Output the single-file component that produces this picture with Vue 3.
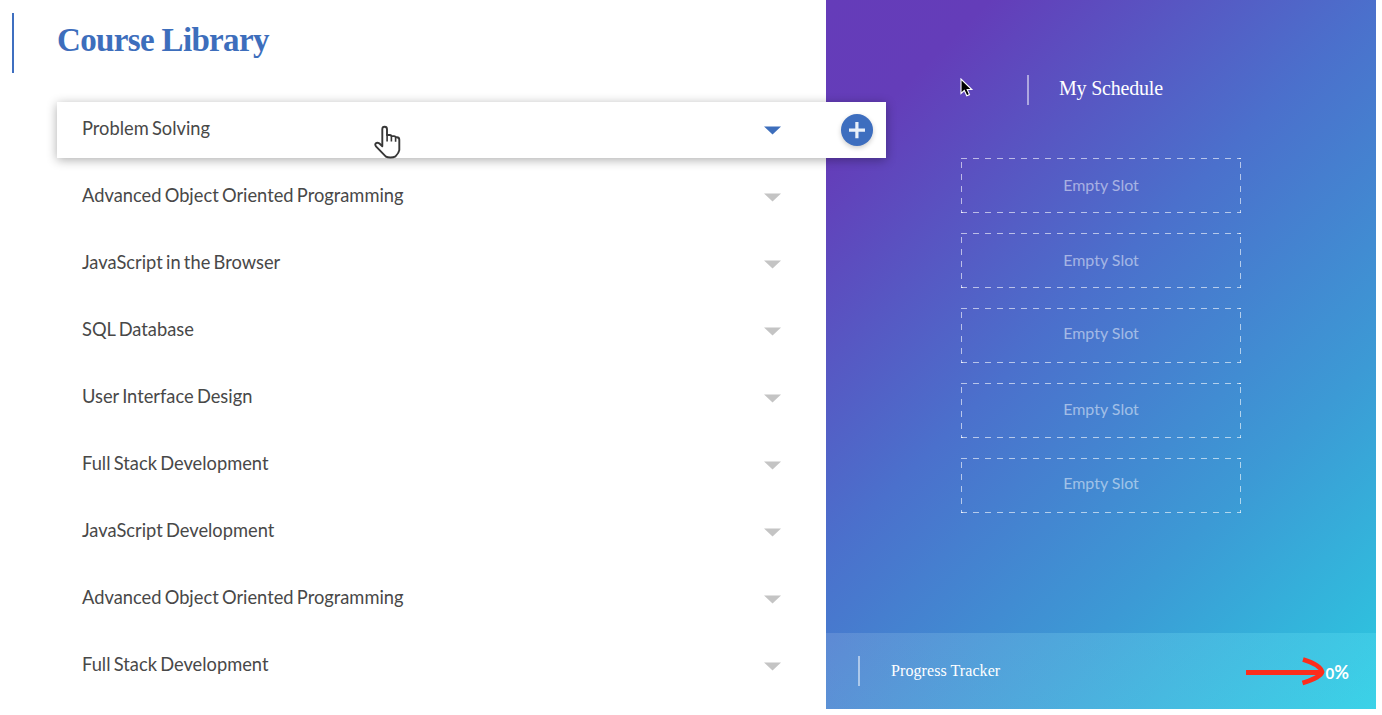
<script setup>
const courses = [
  'Problem Solving',
  'Advanced Object Oriented Programming',
  'JavaScript in the Browser',
  'SQL Database',
  'User Interface Design',
  'Full Stack Development',
  'JavaScript Development',
  'Advanced Object Oriented Programming',
  'Full Stack Development',
]
const slots = 5
</script>

<template>
  <div class="page">
    <main class="library">
      <header class="library-head">
        <span class="head-rule"></span>
        <h1>Course Library</h1>
      </header>
      <ul class="courses">
        <li v-for="(course, i) in courses" :key="i" class="course" :class="{ active: i === 0 }">
          <span class="name">{{ course }}</span>
          <svg class="caret" width="18" height="9" viewBox="0 0 18 9"><path d="M0 .5h17L8.500 8.600z" /></svg>
          <button v-if="i === 0" class="add" aria-label="Add course">
            <svg width="32" height="32" viewBox="0 0 32 32">
              <path d="M8 16.2h16M15.9 8v16.2" fill="none" stroke="#e9f0f9" stroke-width="3.2" />
            </svg>
          </button>
        </li>
      </ul>
      <svg class="hand" width="28" height="36" viewBox="0 0 28 36">
        <path
          d="M8.3 22.3V5.2C8.3 1.9 13 1.9 13 5.2V11h3c1 0 1.4.6 1.6 1.1h2.6c1 0 1.4.6 1.6 1.1h1c1.7 0 2.5 1.2 2.5 2.5v10.500c-.4 2.700-1.900 4.300-3.800 6.200-2.700 1.400-7.300 1.500-9.600.2L2.200 22.700C-.2 19.400 2.800 18 5.200 19.300z"
          fill="#fff" stroke="#373737" stroke-width="1.9" stroke-linejoin="round"
        />
        <path d="M13.100 10.500v7M17.400 12v5.500M21.600 13v4.800" fill="none" stroke="#373737" stroke-width="1.600" />
      </svg>
    </main>

    <aside class="schedule">
      <header class="schedule-head">
        <span class="short-rule"></span>
        <h2>My Schedule</h2>
      </header>
      <div class="slots">
        <div v-for="n in slots" :key="n" class="slot">
          <svg class="dashes" width="280" height="55" viewBox="0 0 280 55">
            <path d="M0 .5H280M0 54.500H280" stroke-dasharray="6 6" />
            <path d="M.5 0V55M279.500 0V55" stroke-dasharray="6 6" stroke-dashoffset="8" />
            <path d="M0 54.500h2M278 .5h2" />
          </svg>
          <span>Empty Slot</span>
        </div>
      </div>
      <footer class="tracker">
        <span class="short-rule"></span>
        <span class="tracker-label">Progress Tracker</span>
        <span class="percent"><span class="digit">0</span>%</span>
        <svg class="arrow" width="84" height="32" viewBox="0 0 84 32">
          <path d="M1 17.500H76M58 4.500C68 7.500 76 12 77 17C76 21 66 25.500 57.500 28" fill="none" stroke="#fc2d1c" stroke-width="4.800" />
        </svg>
      </footer>
      <svg class="pointer" width="14" height="20" viewBox="0 0 14 20">
        <path d="M1 1v14.500l3.300-3 2.500 5.300 2.700-1.200-2.300-5.100h4.600z" fill="#000" stroke="#fff" stroke-width="1.100" />
      </svg>
    </aside>
  </div>
</template>

<style>
body {
  margin: 0;
  background: #fff;
}
</style>

<style scoped>
.page {
  display: flex;
  width: 1382px;
  height: 715px;
  overflow: hidden;
  background: #fff;
  font-family: Lato, "Liberation Sans", sans-serif;
}
.library {
  position: relative;
  z-index: 2;
  width: 826px;
  flex: none;
}
.library-head {
  display: flex;
  padding: 13px 0 0 12px;
  height: 102px;
  box-sizing: border-box;
}
.head-rule {
  width: 2px;
  height: 60px;
  background: #3f6fc0;
}
h1 {
  margin: 6px 0 0 43px;
  font: bold 33px/42px "Liberation Serif", serif;
  letter-spacing: -0.65px;
  color: #3d6ebc;
  white-space: nowrap;
}
.courses {
  display: flex;
  flex-direction: column;
  gap: 11px;
  margin: 0 0 0 57px;
  padding: 0;
  list-style: none;
}
.course {
  display: flex;
  align-items: center;
  width: 829px;
  height: 56px;
  padding: 0 13px 0 25px;
  box-sizing: border-box;
}
.name {
  width: 681px;
  padding-bottom: 5px;
  font-size: 18.3px;
  line-height: 24px;
  word-spacing: -1.4px;
  color: #484848;
}
.caret {
  margin-left: 1px;
  fill: #c4c4c4;
}
.active {
  background: #fff;
  box-shadow: 0 2px 10px rgba(0, 0, 0, 0.32);
}
.active .caret {
  fill: #3d6ebc;
}
.add {
  margin-left: auto;
  width: 32px;
  height: 32px;
  padding: 0;
  border: 0;
  border-radius: 50%;
  background: #3d6ebf;
  box-shadow: 0 2px 5px rgba(0, 0, 0, 0.2);
}
.add svg {
  display: block;
}
.hand {
  position: absolute;
  left: 374px;
  top: 124px;
}
.schedule {
  position: relative;
  display: flex;
  flex-direction: column;
  width: 550px;
  height: 709px;
  background: linear-gradient(135deg, #653cb9 0%, #643db9 13%, #4b70cc 44%, #3c9ad5 72%, #2fc0de 94%, #2bcce2 100%);
}
.schedule-head {
  display: flex;
  margin: 75px 0 0 201px;
  height: 83px;
}
.short-rule {
  width: 2px;
  height: 30px;
  background: rgba(255, 255, 255, 0.5);
}
h2 {
  margin: 0 0 0 30px;
  font: 20px/27px "Liberation Serif", serif;
  letter-spacing: -0.2px;
  color: #fff;
}
.slots {
  display: flex;
  flex-direction: column;
  gap: 20px;
  margin-left: 135px;
}
.slot {
  position: relative;
  display: flex;
  align-items: center;
  justify-content: center;
  width: 280px;
  height: 55px;
  padding-bottom: 2px;
  box-sizing: border-box;
  font-size: 16px;
  line-height: 20px;
  color: rgba(255, 255, 255, 0.5);
}
.slot:nth-child(3),
.slot:nth-child(5) {
  padding-bottom: 5px;
}
.slot:nth-child(4) {
  padding-bottom: 4px;
}
.dashes {
  position: absolute;
  left: 0;
  top: 0;
  stroke: rgba(255, 255, 255, 0.6);
}
.tracker {
  position: relative;
  display: flex;
  align-items: center;
  height: 76px;
  margin-top: auto;
  padding: 0 27px 0 32px;
  background: linear-gradient(90deg, rgba(255, 255, 255, 0.12), rgba(95, 225, 245, 0.3));
  color: #fff;
}
.tracker-label {
  margin-left: 31px;
  font: 16px/20px "Liberation Serif", serif;
  letter-spacing: 0.08px;
}
.percent {
  margin-left: auto;
  padding-top: 2px;
  font-size: 18px;
  font-weight: 700;
  line-height: 20px;
}
.digit {
  font-size: 15px;
}
.arrow {
  position: absolute;
  left: 419px;
  top: 22px;
}
.pointer {
  position: absolute;
  left: 134px;
  top: 78px;
}
</style>
